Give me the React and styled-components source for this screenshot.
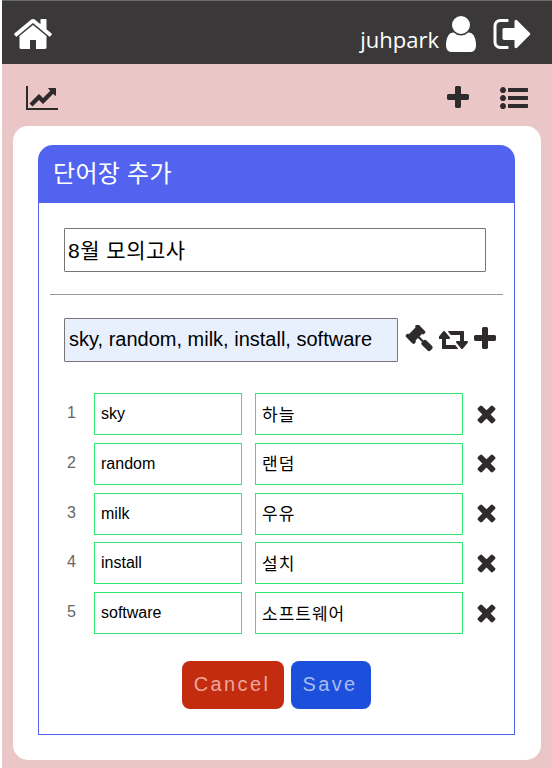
import React from "react";
import styled, { createGlobalStyle } from "styled-components";

const icons = {
  home: {
    d: "M1472 992v480q0 26-19 45t-45 19h-384v-384h-256v384h-384q-26 0-45-19t-19-45v-480q0-1 .5-3t.5-3l575-474 575 474q1 2 1 6zm223-69l-62 74q-8 9-21 11h-3q-13 0-21-7l-692-577-692 577q-12 8-24 7-13-2-21-11l-62-74q-8-10-7-23.5t11-21.5l719-599q32-26 76-26t76 26l244 204v-195q0-14 9-23t23-9h192q14 0 23 9t9 23v408l219 182q10 8 11 21.5t-7 23.5z",
  },
  user: {
    d: "M1536 1399q0 109-62.5 187t-150.5 78h-854q-88 0-150.5-78t-62.5-187q0-85 8.5-160.5t31.5-152 58.5-131 94-89 134.5-34.5q131 128 313 128t313-128q76 0 134.5 34.5t94 89 58.5 131 31.5 152 8.5 160.5zm-256-887q0 159-112.5 271.5t-271.5 112.5-271.5-112.5-112.5-271.5 112.5-271.5 271.5-112.5 271.5 112.5 112.5 271.5z",
  },
  signOut: {
    d: "M704 1440q0 4 1 20t.5 26.5-3 23.5-10 19.5-20.5 6.5h-320q-119 0-203.5-84.5t-84.5-203.5v-704q0-119 84.5-203.5t203.5-84.5h320q13 0 22.5 9.5t9.5 22.5q0 4 1 20t.5 26.5-3 23.5-10 19.5-20.5 6.5h-320q-66 0-113 47t-47 113v704q0 66 47 113t113 47h312l11.5 1 11.5 3 8 5.5 7 9 2 13.5zm928-544q0 26-19 45l-544 544q-19 19-45 19t-45-19-19-45v-288h-448q-26 0-45-19t-19-45v-384q0-26 19-45t45-19h448v-288q0-26 19-45t45-19 45 19l544 544q19 19 19 45z",
  },
  chart: {
    box: 2048,
    d: "M2048 1536v128h-2048v-1536h128v1408h1920zm-128-1248v435q0 21-19.5 29.5t-35.5-7.5l-121-121-633 633q-10 10-23 10t-23-10l-233-233-416 416-192-192 585-585q10-10 23-10t23 10l233 233 464-464-121-121q-16-16-7.5-35.5t29.5-19.5h435q14 0 23 9t9 23z",
  },
  plus: {
    d: "M1600 736v192q0 40-28 68t-68 28h-416v416q0 40-28 68t-68 28h-192q-40 0-68-28t-28-68v-416h-416q-40 0-68-28t-28-68v-192q0-40 28-68t68-28h416v-416q0-40 28-68t68-28h192q40 0 68 28t28 68v416h416q40 0 68 28t28 68z",
  },
  list: {
    d: "M384 1408q0 80-56 136t-136 56-136-56-56-136 56-136 136-56 136 56 56 136zm0-512q0 80-56 136t-136 56-136-56-56-136 56-136 136-56 136 56 56 136zm1408 416v192q0 13-9.5 22.5t-22.5 9.5h-1216q-13 0-22.5-9.5t-9.5-22.5v-192q0-13 9.5-22.5t22.5-9.5h1216q13 0 22.5 9.5t9.5 22.5zm-1408-928q0 80-56 136t-136 56-136-56-56-136 56-136 136-56 136 56 56 136zm1408 416v192q0 13-9.5 22.5t-22.5 9.5h-1216q-13 0-22.5-9.5t-9.5-22.5v-192q0-13 9.5-22.5t22.5-9.5h1216q13 0 22.5 9.5t9.5 22.5zm0-512v192q0 13-9.5 22.5t-22.5 9.5h-1216q-13 0-22.5-9.5t-9.5-22.5v-192q0-13 9.5-22.5t22.5-9.5h1216q13 0 22.5 9.5t9.5 22.5z",
  },
  gavel: {
    d: "M1771 1440q0 53-37 90l-107 108q-39 37-91 37-53 0-90-37l-363-364q-38-36-38-90 0-53 43-96l-256-256-126 126q-14 14-34 14t-34-14q2 2 12.5 12t12.5 13 10 11.5 10 13.5 6 13.5 5.5 16.5 1.5 18q0 38-28 68-3 3-16.5 18t-19 20.5-18.5 16.5-22 15.5-22 9-26 4.5q-40 0-68-28l-408-408q-28-28-28-68 0-13 4.5-26t9-22 15.5-22 16.5-18.5 20.5-19 18-16.5q30-28 68-28 10 0 18 1.5t16.5 5.5 13.5 6 13.5 10 11.5 10 13 12.5 12 12.5q-14-14-14-34t14-34l348-348q14-14 34-14t34 14q-2-2-12.5-12t-12.5-13-10-11.5-10-13.5-6-13.5-5.5-16.5-1.5-18q0-38 28-68 3-3 16.5-18t19-20.5 18.5-16.5 22-15.5 22-9 26-4.5q40 0 68 28l408 408q28 28 28 68 0 13-4.5 26t-9 22-15.5 22-16.5 18.5-20.5 19-18 16.5q-30 28-68 28-10 0-18-1.5t-16.5-5.5-13.5-6-13.5-10-11.5-10-13-12.5-12-12.5q14 14 14 34t-14 34l-126 126 256 256q43-43 96-43 52 0 91 37l363 363q37 39 37 91z",
  },
  retweet: {
    box: 1920,
    d: "M1216 1504q0 13-9.5 22.5t-22.5 9.5h-960q-8 0-13.5-2t-9-7-5.5-8-3-11.5-1-11.5v-600h-192q-26 0-45-19t-19-45q0-24 15-41l320-384q19-22 49-22t49 22l320 384q15 17 15 41 0 26-19 45t-45 19h-192v384h576q16 0 25 11l160 192q7 10 7 21zm640-416q0 24-15 41l-320 384q-20 23-49 23t-49-23l-320-384q-15-17-15-41 0-26 19-45t45-19h192v-384h-576q-16 0-25-12l-160-192q-7-9-7-20 0-13 9.5-22.5t22.5-9.5h960q8 0 13.5 2t9 7 5.5 8 3 11.5 1 11.5v600h192q26 0 45 19t19 45z",
  },
  times: {
    d: "M1490 1322q0 40-28 68l-136 136q-28 28-68 28t-68-28l-294-294-294 294q-28 28-68 28t-68-28l-136-136q-28-28-28-68t28-68l294-294-294-294q-28-28-28-68t28-68l136-136q28-28 68-28t68 28l294 294 294-294q28-28 68-28t68 28l136 136q28 28 28 68t-28 68l-294 294 294 294q28 28 28 68z",
  },
};

const Icon = ({ name, size, className }) => {
  const { d, box = 1792 } = icons[name];
  return (
    <IconSvg
      className={className}
      width={(size * box) / 1792}
      height={size}
      viewBox={`0 0 ${box} 1792`}
    >
      <path d={d} />
    </IconSvg>
  );
};

const words = [
  { word: "sky", meaning: "하늘" },
  { word: "random", meaning: "랜덤" },
  { word: "milk", meaning: "우유" },
  { word: "install", meaning: "설치" },
  { word: "software", meaning: "소프트웨어" },
];

const App = () => {
  return (
    <>
      <GlobalStyle />
      <Page>
        <Header>
          <Icon name="home" size={42} />
          <UserBox>
            <UserName>juhpark</UserName>
            <Icon name="user" size={42} />
            <Icon name="signOut" size={42} />
          </UserBox>
        </Header>
        <Toolbar>
          <Icon name="chart" size={28} />
          <ToolGroup>
            <Icon name="plus" size={28} />
            <Icon name="list" size={28} />
          </ToolGroup>
        </Toolbar>
        <Card>
          <Panel>
            <PanelTitle>단어장 추가</PanelTitle>
            <PanelBody>
              <TitleRow>
                <TitleInput defaultValue="8월 모의고사" />
              </TitleRow>
              <Divider />
              <GenerateRow>
                <WordsInput defaultValue="sky, random, milk, install, software" />
                <GavelIcon name="gavel" size={28} />
                <Icon name="retweet" size={28} />
                <Icon name="plus" size={28} />
              </GenerateRow>
              <WordList>
                {words.map((item, index) => (
                  <WordRow key={item.word}>
                    <RowNumber>{index + 1}</RowNumber>
                    <WordInput defaultValue={item.word} />
                    <MeaningInput defaultValue={item.meaning} />
                    <RemoveButton>
                      <Icon name="times" size={27} />
                    </RemoveButton>
                  </WordRow>
                ))}
              </WordList>
              <Actions>
                <ActionButton $color="#c42c10" $text="#eba79b" $width="102px">
                  Cancel
                </ActionButton>
                <ActionButton $color="#1c4fdc" $text="#a7bcf0" $width="80px">
                  Save
                </ActionButton>
              </Actions>
            </PanelBody>
          </Panel>
        </Card>
      </Page>
    </>
  );
};

export default App;

const GlobalStyle = createGlobalStyle`
  html, body {
    margin: 0;
    padding: 0;
    background: #ffffff;
  }
  * {
    box-sizing: border-box;
  }
  body {
    font-family: "Liberation Sans", "Noto Sans CJK KR", sans-serif;
    overflow: hidden;
  }
`;

const IconSvg = styled.svg`
  display: block;
  flex: none;
  fill: currentColor;
`;

const Page = styled.div`
  width: 550px;
  height: 768px;
  margin-left: 2px;
  border-top: 1px solid #6b6b6b;
  background: #eac6c6;
  display: flex;
  flex-direction: column;
`;

const Header = styled.header`
  height: 63px;
  flex: none;
  background: #3b3839;
  color: #ffffff;
  display: flex;
  align-items: center;
  justify-content: space-between;
  padding: 2px 18px 0 10px;
`;

const UserBox = styled.div`
  display: flex;
  align-items: center;
  gap: 10px;
`;

const UserName = styled.span`
  font-family: "Open Sans", sans-serif;
  font-size: 22px;
  margin-top: 10px;
  margin-right: -9px;
`;

const Toolbar = styled.div`
  height: 62px;
  flex: none;
  color: #2f2a2b;
  display: flex;
  align-items: center;
  justify-content: space-between;
  padding: 6px 24px 0 24px;
`;

const ToolGroup = styled.div`
  display: flex;
  align-items: center;
  gap: 28px;
`;

const Card = styled.main`
  margin: 0 11px;
  height: 634px;
  flex: none;
  padding: 19px 26px 25px 25px;
  background: #ffffff;
  border-radius: 15px;
`;

const Panel = styled.section`
  height: 100%;
  display: flex;
  flex-direction: column;
`;

const PanelTitle = styled.h2`
  margin: 0;
  height: 58px;
  flex: none;
  padding: 0 0 6px 15px;
  display: flex;
  align-items: center;
  font-size: 24px;
  font-weight: 400;
  letter-spacing: 0.3px;
  color: #ffffff;
  background: #5264ef;
  border-radius: 15px 15px 0 0;
`;

const PanelBody = styled.div`
  flex: 1;
  padding: 25px 11px 0 11px;
  border: 1px solid #5264ef;
  border-top: none;
`;

const TitleRow = styled.div`
  padding: 0 16px 0 14px;
`;

const FieldBase = styled.input`
  display: block;
  font-family: "Liberation Sans", "Noto Sans CJK KR", sans-serif;
  color: #000000;
  outline: none;
  border-radius: 1px;
`;

const TitleInput = styled(FieldBase)`
  width: 422px;
  height: 44px;
  padding: 0 3px 2px;
  font-size: 21px;
  letter-spacing: 0.5px;
  border: 1px solid #767676;
`;

const Divider = styled.hr`
  margin: 22px 0 23px;
  border: none;
  border-top: 1px solid #999999;
`;

const GenerateRow = styled.div`
  display: flex;
  align-items: center;
  padding-left: 14px;
  color: #2f2a2b;
  gap: 2px;

  svg {
    margin-top: -2px;
  }
`;

const WordsInput = styled(FieldBase)`
  width: 334px;
  height: 44px;
  padding: 0 4px 2px;
  margin-right: 5px;
  font-size: 20px;
  background: #e8f0fe;
  border: 1px solid #767676;
`;

const GavelIcon = styled(Icon)`
  margin-right: 4px;
`;

const WordList = styled.div`
  margin-top: 31px;
  display: flex;
  flex-direction: column;
  gap: 7.8px;
`;

const WordRow = styled.div`
  display: flex;
  align-items: center;
  height: 42px;
`;

const RowNumber = styled.span`
  width: 44px;
  padding: 0 0 2px 17px;
  font-size: 16px;
  color: #666666;
`;

const WordInput = styled(FieldBase)`
  width: 148px;
  height: 42px;
  padding: 0 6px;
  font-size: 16px;
  border: 1px solid #32e875;
  border-radius: 0;
`;

const MeaningInput = styled(WordInput)`
  width: 208px;
  margin-left: 13px;
  padding: 0 6px 2px;
  font-size: 17px;
  letter-spacing: 1px;
`;

const RemoveButton = styled.div`
  display: flex;
  margin: -2px 0 0 10px;
  color: #2f2a2b;
`;

const Actions = styled.div`
  display: flex;
  justify-content: center;
  gap: 7px;
  margin-top: 27px;
`;

const ActionButton = styled.button`
  width: ${(props) => props.$width};
  height: 48px;
  padding: 0 2px 2px 0;
  border: none;
  border-radius: 8px;
  font-family: "Liberation Sans", sans-serif;
  font-size: 20px;
  letter-spacing: 2.4px;
  background: ${(props) => props.$color};
  color: ${(props) => props.$text};
`;
